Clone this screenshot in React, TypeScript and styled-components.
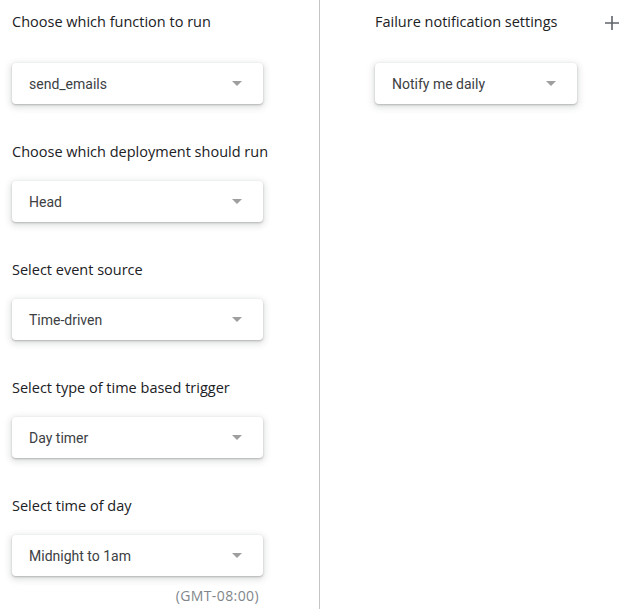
import styled, { createGlobalStyle } from "styled-components";

const GlobalStyle = createGlobalStyle`
  html, body {
    margin: 0;
    padding: 0;
    background: #fff;
  }
  body {
    font-family: Roboto, "Liberation Sans", sans-serif;
    color: #202124;
  }
`;

type Section = { label: string; value: string; note?: string };

const sections: Section[] = [
  { label: "Choose which function to run", value: "send_emails" },
  { label: "Choose which deployment should run", value: "Head" },
  { label: "Select event source", value: "Time-driven" },
  { label: "Select type of time based trigger", value: "Day timer" },
  { label: "Select time of day", value: "Midnight to 1am", note: "(GMT-08:00)" },
];

const Select = ({ value, width }: { value: string; width: number }) => (
  <SelectBox $width={width}>
    <span>{value}</span>
    <Arrow />
  </SelectBox>
);

const App = () => {
  return (
    <>
      <GlobalStyle />
      <Page>
        <LeftColumn>
          {sections.map((s, i) => (
            <Field key={s.label}>
              <Label $first={i === 0}>{s.label}</Label>
              <Select value={s.value} width={251} />
              {s.note && <Note>{s.note}</Note>}
            </Field>
          ))}
        </LeftColumn>
        <RightColumn>
          <Header>
            <Label $first>Failure notification settings</Label>
            <AddButton aria-label="Add">
              <svg width="14" height="14" viewBox="0 0 14 14">
                <path d="M7 0v14M0 7h14" stroke="#5f6368" strokeWidth="1.6" />
              </svg>
            </AddButton>
          </Header>
          <Select value="Notify me daily" width={202} />
        </RightColumn>
      </Page>
    </>
  );
};

export default App;

const Page = styled.div`
  display: flex;
  align-items: flex-start;
`;

const LeftColumn = styled.div`
  width: 307px;
  height: 597px;
  padding: 12px 0 0 12px;
  border-right: 1px solid #c4c4c4;
`;

const RightColumn = styled.div`
  flex: 1;
  padding: 12px 18px 0 55px;
`;

const Header = styled.div`
  display: flex;
  justify-content: space-between;
  align-items: flex-start;
`;

const AddButton = styled.button`
  border: none;
  background: none;
  padding: 0;
  margin-top: 4px;
  width: 14px;
  height: 14px;
  display: flex;
  cursor: pointer;
`;

const Field = styled.div`
  display: flex;
  flex-direction: column;
  margin-bottom: 38px;
`;

const Label = styled.div<{ $first?: boolean }>`
  font-family: "Open Sans", "Liberation Sans", sans-serif;
  font-size: 14.5px;
  line-height: 20px;
  color: #202124;
  margin-bottom: ${(p) => (p.$first ? "31px" : "19px")};
  white-space: nowrap;
`;

const SelectBox = styled.div<{ $width: number }>`
  box-sizing: border-box;
  width: ${(p) => p.$width}px;
  height: 41px;
  display: flex;
  align-items: center;
  justify-content: space-between;
  padding: 0 21px 0 17px;
  background: #fff;
  border-radius: 4px;
  box-shadow: 0 1px 2px 0 rgba(60, 64, 67, 0.3),
    0 2px 6px 2px rgba(60, 64, 67, 0.15);
  font-size: 14px;
  font-weight: 400;
  color: #3c4043;
`;

const Arrow = styled.span`
  width: 0;
  height: 0;
  border-left: 5px solid transparent;
  border-right: 5px solid transparent;
  border-top: 5px solid #9e9e9e;
`;

const Note = styled.div`
  width: 247px;
  margin-top: 12px;
  text-align: right;
  font-family: "Open Sans", "Liberation Sans", sans-serif;
  font-size: 14px;
  letter-spacing: 0.4px;
  line-height: 16px;
  color: #80868b;
`;
